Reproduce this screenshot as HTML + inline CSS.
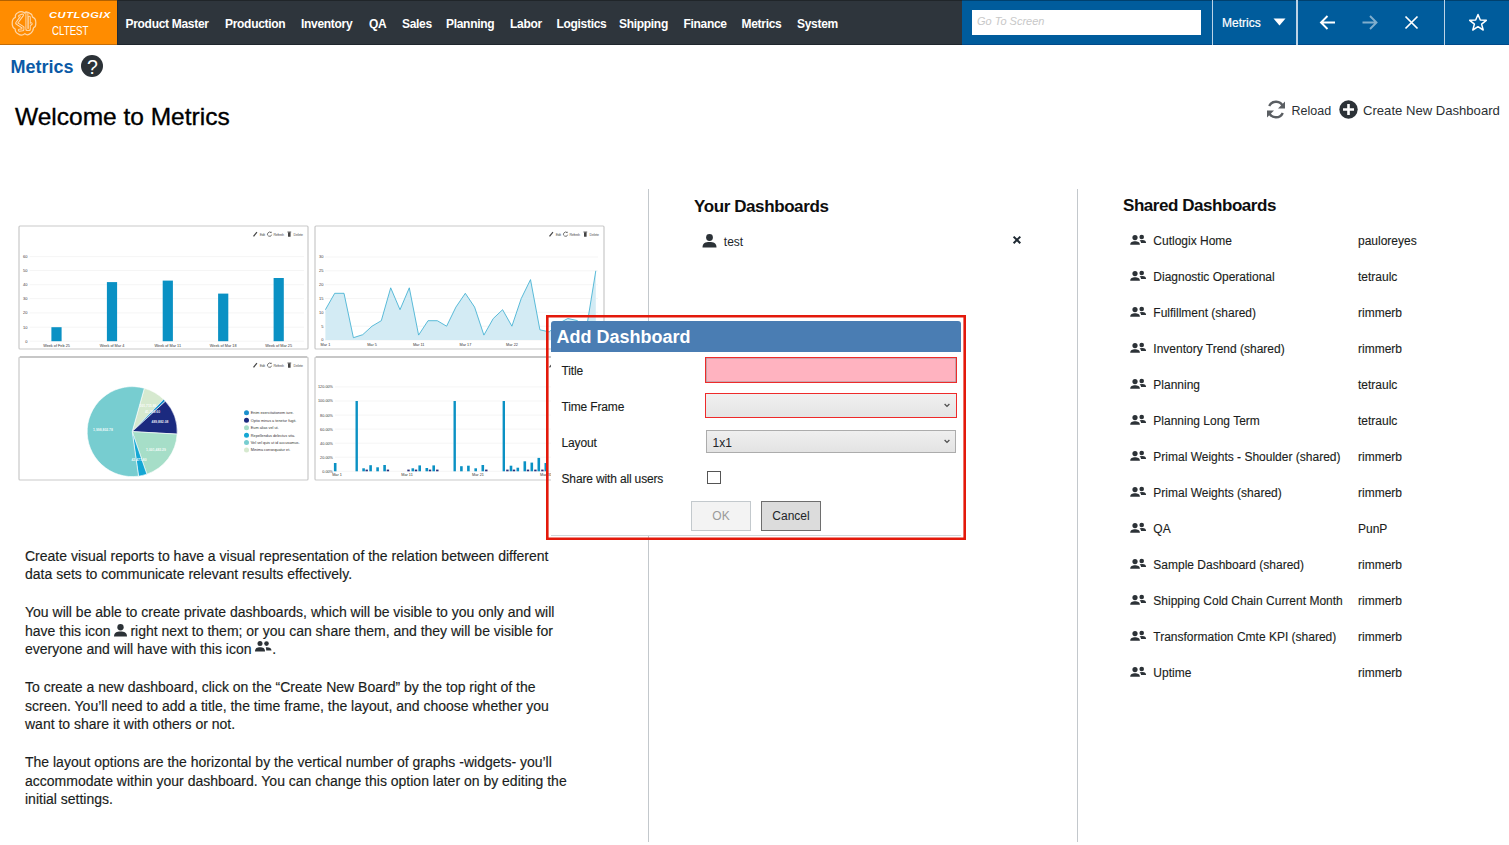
<!DOCTYPE html>
<html><head><meta charset="utf-8">
<style>
*{box-sizing:border-box}
html,body{margin:0;padding:0}
body{width:1509px;height:845px;position:relative;overflow:hidden;background:#fff;font-family:"Liberation Sans",sans-serif;color:#212529}
.a{position:absolute;white-space:nowrap}
.nav{position:absolute;left:0;top:0;width:1509px;height:45px;background:#2e353c}
.nv{position:absolute;top:17.5px;font-size:12px;font-weight:bold;color:#fff;line-height:12px;letter-spacing:-0.3px}
.sep{position:absolute;top:0;width:1.6px;height:45px;background:#bcd3e6}
.tile{position:absolute;border:1.5px solid #d2d2d2;border-radius:2px;background:#fff;overflow:hidden}
.row{position:absolute;left:1123px;height:20px;width:360px}
.sh{font-size:12px;line-height:12px;color:#1a1d20;-webkit-text-stroke:0.12px #1a1d20}
.lbl{position:absolute;left:561.5px;font-size:12px;line-height:12px;color:#1a1d20;letter-spacing:-0.15px;-webkit-text-stroke:0.12px #1a1d20}
.p{position:absolute;left:25px;top:546.6px;font-size:14px;line-height:18.75px;color:#1a1d20;white-space:nowrap;-webkit-text-stroke:0.15px #1a1d20}
</style></head><body>

<!-- NAVBAR -->
<div class="nav"></div>
<div class="a" style="left:0;top:0;width:117px;height:45px;background:#ff8c00;border-bottom:1px solid #c46d08"></div>
<div class="a" style="left:117px;top:44px;width:845px;height:1px;background:#1f262d"></div>
<div class="a" style="left:962px;top:0;width:547px;height:45px;background:#005c9c;border-bottom:1px solid #004a8a"></div>
<div class="a" style="left:0;top:0;width:1509px;height:1px;background:rgba(0,0,0,0.3)"></div>
<div class="a" style="left:116.5px;top:0;width:1.2px;height:45px;background:#1d2a38"></div>

<!-- logo -->
<svg class="a" style="left:11px;top:10px" width="26" height="27" viewBox="0 0 26 27" fill="none" stroke-linejoin="round" stroke-linecap="round">
  <path stroke="#ffd6a6" stroke-width="1.25" d="M13.5 3.1 C14.2 2.2 15 1.9 15.9 2 C17 2.2 18 2.6 18.8 3.3 C19.8 3.9 20.6 4.2 20.9 4.9 C21.2 5.8 21.2 6.5 21.5 7 C22.6 7.6 23.4 8 23.8 8.7 C24.6 10 24.9 11.2 24.8 12.4 C24.8 13.8 24.7 15 24.4 16.1 C24 16.9 23.3 17.4 22.6 17.8 C22.2 18.8 22.1 19.8 21.7 20.7 C21.1 21.8 20.4 22.6 19.7 23.2 C18.6 24 17.5 24.6 16.4 24.8 C15.4 24.8 14.6 24.3 13.9 23.6 C12.9 24.5 11.8 25.2 10.6 25.2 C9.4 25.1 8.2 24.6 7.3 24 C6.1 23.3 5.1 22.5 4.6 21.5 C4.2 20.7 4.3 19.8 4.1 19 C3.1 18.4 2.3 17.7 1.9 16.9 C1.3 15.6 1.1 14.2 1.2 12.8 C1.2 11.6 1.4 10.5 1.9 9.5 C2.5 8.5 3.4 7.9 4.4 7.4 C4.3 6.5 4.2 5.6 4.6 4.9 C5.1 3.9 5.9 3.2 6.8 2.7 C7.8 2 8.9 1.6 10.1 1.6 C11.1 1.6 12 1.8 12.6 2.2 C13 2.5 13.3 2.8 13.5 3.1"/>
  <g stroke="#ffd6a6" stroke-width="3"><path d="M8.6 6.2 L11.6 5 L5.6 13.2 L12 17.4 L11.8 19.8 L8.3 20.2"/><path d="M15.9 3.2 L15.9 19.4 L18.3 19.4 L18.3 14.8 L20.2 13.8 M18.3 14.8 L18.3 7.2"/></g>
  <g stroke="#ff8c00" stroke-width="1"><path d="M8.6 6.2 L11.6 5 L5.6 13.2 L12 17.4 L11.8 19.8 L8.3 20.2"/><path d="M15.9 3.2 L15.9 19.4 L18.3 19.4 L18.3 14.8 L20.2 13.8 M18.3 14.8 L18.3 7.2"/></g>
</svg>
<div class="a" style="left:49px;top:9.6px;font-size:9.5px;line-height:9px;font-weight:bold;font-style:italic;color:#fff;letter-spacing:0.55px;transform:scaleX(1.16);transform-origin:left">CUTLOGIX</div>
<div class="a" style="left:52px;top:25.4px;font-size:12px;line-height:12px;color:#fff;transform:scaleX(0.81);transform-origin:left">CLTEST</div>

<div class="nv" style="left:125.5px">Product Master</div>
<div class="nv" style="left:225px">Production</div>
<div class="nv" style="left:301px">Inventory</div>
<div class="nv" style="left:369px">QA</div>
<div class="nv" style="left:402px">Sales</div>
<div class="nv" style="left:446px">Planning</div>
<div class="nv" style="left:510px">Labor</div>
<div class="nv" style="left:556.5px">Logistics</div>
<div class="nv" style="left:619px">Shipping</div>
<div class="nv" style="left:683.5px">Finance</div>
<div class="nv" style="left:741.5px">Metrics</div>
<div class="nv" style="left:797px">System</div>

<!-- search -->
<div class="a" style="left:972.3px;top:10px;width:228.7px;height:25.3px;background:#fff"></div>
<div class="a" style="left:977px;top:15.6px;font-size:11px;line-height:11px;font-style:italic;color:#c8c8c8">Go To Screen</div>
<div class="sep" style="left:1211.5px"></div>
<div class="a" style="left:1222px;top:17.4px;font-size:12px;line-height:12px;color:#fff;-webkit-text-stroke:0.2px #fff">Metrics</div>
<svg class="a" style="left:1273px;top:18px" width="13" height="8"><path d="M0.5 0.5 L12.5 0.5 L6.5 7.5 Z" fill="#fff"/></svg>
<div class="sep" style="left:1296.2px"></div>
<svg class="a" style="left:1319px;top:14px" width="18" height="17" viewBox="0 0 18 17" fill="none" stroke="#fff" stroke-width="1.9">
  <path d="M16 8.5 L2 8.5 M8.5 2 L2 8.5 L8.5 15"/>
</svg>
<svg class="a" style="left:1361px;top:14px" width="18" height="17" viewBox="0 0 18 17" fill="none" stroke="#fff" stroke-width="1.9" opacity="0.5">
  <path d="M1.5 8.5 L15.5 8.5 M9 2 L15.5 8.5 L9 15"/>
</svg>
<svg class="a" style="left:1404px;top:15px" width="15" height="15" viewBox="0 0 15 15" fill="none" stroke="#fff" stroke-width="1.7">
  <path d="M1.5 1.5 L13.5 13.5 M13.5 1.5 L1.5 13.5"/>
</svg>
<div class="sep" style="left:1443.9px"></div>
<svg class="a" style="left:1468px;top:13px" width="20" height="19" viewBox="0 0 20 19" fill="none" stroke="#fff" stroke-width="1.5" stroke-linejoin="round">
  <path d="M10 1.5 L12.3 7 L18.3 7.3 L13.6 11.1 L15.2 17 L10 13.7 L4.8 17 L6.4 11.1 L1.7 7.3 L7.7 7 Z"/>
</svg>

<!-- page header -->
<div class="a" style="left:10.5px;top:58.1px;font-size:18px;line-height:18px;font-weight:bold;color:#0b5aa6">Metrics</div>
<div class="a" style="left:81px;top:55px;width:22px;height:22px;border-radius:50%;background:#2c3237"></div>
<div class="a" style="left:81.5px;top:57.5px;width:22px;text-align:center;font-size:19.5px;line-height:19.5px;color:#fff">?</div>

<div class="a" style="left:15px;top:105.2px;font-size:24.5px;line-height:24.5px;color:#000;-webkit-text-stroke:0.35px #000">Welcome to Metrics</div>

<svg class="a" style="left:1266px;top:100px" width="20" height="19" viewBox="0 0 20 19">
  <path d="M17 6.5 A7.5 7.5 0 0 0 3.2 6" fill="none" stroke="#5a5e62" stroke-width="2.4"/>
  <path d="M19 1.5 L19 8.5 L12 8.5 Z" fill="#5a5e62"/>
  <path d="M3 12.5 A7.5 7.5 0 0 0 16.8 13" fill="none" stroke="#5a5e62" stroke-width="2.4"/>
  <path d="M1 17.5 L1 10.5 L8 10.5 Z" fill="#5a5e62"/>
</svg>
<div class="a" style="left:1291.5px;top:104.9px;font-size:12.5px;line-height:12.5px;color:#2b2f33">Reload</div>
<svg class="a" style="left:1338.5px;top:100px" width="19" height="19" viewBox="0 0 19 19">
  <circle cx="9.5" cy="9.5" r="9.2" fill="#2c3237"/>
  <path d="M9.5 4 L9.5 15 M4 9.5 L15 9.5" stroke="#fff" stroke-width="2.6"/>
</svg>
<div class="a" style="left:1363px;top:104.1px;font-size:13.1px;line-height:13.1px;color:#2b2f33">Create New Dashboard</div>

<!-- separators -->
<div class="a" style="left:647.5px;top:189px;width:1.6px;height:653px;background:#c3c8cc"></div>
<div class="a" style="left:1076.5px;top:189px;width:1.6px;height:653px;background:#c3c8cc"></div>

<!-- TILES -->
<svg class="a" style="left:0;top:0" width="650" height="500" viewBox="0 0 650 500" font-family="Liberation Sans">
<defs><g id="tb" fill="#555">
<path d="M-55 10.6 L-51.5 6.2 L-50.6 7 L-54 11.3 Z" fill="#444"/>
<text x="-48.3" y="10.4" font-size="3.6" fill="#555" textLength="5.3">Edit</text>
<path d="M-37 7.2 A2.1 2.1 0 1 0 -36.4 9.2" fill="none" stroke="#555" stroke-width="0.8"/><path d="M-37.8 6.3 L-36.4 6.3 L-36.4 7.8 Z" fill="#555"/>
<text x="-34.4" y="10.4" font-size="3.6" fill="#555" textLength="10.4">Refresh</text>
<rect x="-20" y="6.8" width="2.6" height="4.4" rx="0.5" fill="#444"/><rect x="-20.6" y="6.1" width="3.8" height="0.8" fill="#444"/>
<text x="-14.5" y="10.4" font-size="3.6" fill="#555" textLength="9.5">Delete</text>
</g></defs>
<rect x="19" y="226" width="289" height="123" rx="1" fill="#fff" stroke="#c9c9c9" stroke-width="1.2"/>
<use href="#tb" transform="translate(308,225.5)"/>
<rect x="315" y="226" width="289" height="123" rx="1" fill="#fff" stroke="#c9c9c9" stroke-width="1.2"/>
<use href="#tb" transform="translate(604,225.5)"/>
<rect x="19" y="357" width="289" height="123" rx="1" fill="#fff" stroke="#c9c9c9" stroke-width="1.2"/>
<line x1="20" y1="357" x2="307" y2="357" stroke="#a9a9a9" stroke-width="1.2"/>
<use href="#tb" transform="translate(308,356.5)"/>
<rect x="315" y="357" width="289" height="123" rx="1" fill="#fff" stroke="#c9c9c9" stroke-width="1.2"/>
<line x1="316" y1="357" x2="603" y2="357" stroke="#a9a9a9" stroke-width="1.2"/>
<use href="#tb" transform="translate(604,356.5)"/>
<line x1="29.5" y1="256.6" x2="304" y2="256.6" stroke="#f1f1f1" stroke-width="0.7"/>
<text x="27.5" y="258.0" font-size="4" fill="#3a3a3a" text-anchor="end">60</text>
<line x1="29.5" y1="270.5" x2="304" y2="270.5" stroke="#f1f1f1" stroke-width="0.7"/>
<text x="27.5" y="271.9" font-size="4" fill="#3a3a3a" text-anchor="end">50</text>
<line x1="29.5" y1="284.7" x2="304" y2="284.7" stroke="#f1f1f1" stroke-width="0.7"/>
<text x="27.5" y="286.09999999999997" font-size="4" fill="#3a3a3a" text-anchor="end">40</text>
<line x1="29.5" y1="298.6" x2="304" y2="298.6" stroke="#f1f1f1" stroke-width="0.7"/>
<text x="27.5" y="300.0" font-size="4" fill="#3a3a3a" text-anchor="end">30</text>
<line x1="29.5" y1="312.9" x2="304" y2="312.9" stroke="#f1f1f1" stroke-width="0.7"/>
<text x="27.5" y="314.29999999999995" font-size="4" fill="#3a3a3a" text-anchor="end">20</text>
<line x1="29.5" y1="327.2" x2="304" y2="327.2" stroke="#f1f1f1" stroke-width="0.7"/>
<text x="27.5" y="328.59999999999997" font-size="4" fill="#3a3a3a" text-anchor="end">10</text>
<line x1="29.5" y1="341.2" x2="304" y2="341.2" stroke="#f1f1f1" stroke-width="0.7"/>
<text x="27.5" y="342.59999999999997" font-size="4" fill="#3a3a3a" text-anchor="end">0</text>
<rect x="51.4" y="327.2" width="10.2" height="14.0" fill="#0a91c4"/>
<text x="56.5" y="346.5" font-size="3.8" fill="#333" text-anchor="middle">Week of Feb 25</text>
<rect x="106.9" y="282.1" width="10.2" height="59.099999999999966" fill="#0a91c4"/>
<text x="112" y="346.5" font-size="3.8" fill="#333" text-anchor="middle">Week of Mar 4</text>
<rect x="162.70000000000002" y="280.6" width="10.2" height="60.599999999999966" fill="#0a91c4"/>
<text x="167.8" y="346.5" font-size="3.8" fill="#333" text-anchor="middle">Week of Mar 11</text>
<rect x="218.1" y="293.6" width="10.2" height="47.599999999999966" fill="#0a91c4"/>
<text x="223.2" y="346.5" font-size="3.8" fill="#333" text-anchor="middle">Week of Mar 18</text>
<rect x="273.59999999999997" y="278" width="10.2" height="63.19999999999999" fill="#0a91c4"/>
<text x="278.7" y="346.5" font-size="3.8" fill="#333" text-anchor="middle">Week of Mar 25</text>
<line x1="325" y1="257.0" x2="598" y2="257.0" stroke="#f1f1f1" stroke-width="0.7"/>
<text x="323.5" y="258.4" font-size="4" fill="#3a3a3a" text-anchor="end">30</text>
<line x1="325" y1="270.8" x2="598" y2="270.8" stroke="#f1f1f1" stroke-width="0.7"/>
<text x="323.5" y="272.2" font-size="4" fill="#3a3a3a" text-anchor="end">25</text>
<line x1="325" y1="284.7" x2="598" y2="284.7" stroke="#f1f1f1" stroke-width="0.7"/>
<text x="323.5" y="286.1" font-size="4" fill="#3a3a3a" text-anchor="end">20</text>
<line x1="325" y1="298.5" x2="598" y2="298.5" stroke="#f1f1f1" stroke-width="0.7"/>
<text x="323.5" y="299.9" font-size="4" fill="#3a3a3a" text-anchor="end">15</text>
<line x1="325" y1="312.3" x2="598" y2="312.3" stroke="#f1f1f1" stroke-width="0.7"/>
<text x="323.5" y="313.7" font-size="4" fill="#3a3a3a" text-anchor="end">10</text>
<line x1="325" y1="326.2" x2="598" y2="326.2" stroke="#f1f1f1" stroke-width="0.7"/>
<text x="323.5" y="327.6" font-size="4" fill="#3a3a3a" text-anchor="end">5</text>
<line x1="325" y1="340.0" x2="598" y2="340.0" stroke="#f1f1f1" stroke-width="0.7"/>
<text x="323.5" y="341.4" font-size="4" fill="#3a3a3a" text-anchor="end">0</text>
<path d="M325.4 309.7 L334.7 293.3 L344.0 293.3 L353.4 337.7 L362.7 334.7 L372.0 326.2 L381.3 320.7 L390.7 287.8 L400.0 309.7 L409.3 287.8 L418.6 335.1 L428.0 320.7 L437.3 320.7 L446.6 326.2 L455.9 307.1 L465.3 293.3 L474.6 307.1 L483.9 335.1 L493.2 318.6 L502.6 309.7 L511.9 326.2 L521.2 298.6 L530.5 279.6 L539.9 329.8 L549.2 331.9 L558.5 323.5 L567.8 318.5 L577.1 320.5 L586.5 328.0 L595.8 270.8 L595.8 340 L325.4 340 Z" fill="#d3ebf4"/>
<path d="M325.4 309.7 L334.7 293.3 L344.0 293.3 L353.4 337.7 L362.7 334.7 L372.0 326.2 L381.3 320.7 L390.7 287.8 L400.0 309.7 L409.3 287.8 L418.6 335.1 L428.0 320.7 L437.3 320.7 L446.6 326.2 L455.9 307.1 L465.3 293.3 L474.6 307.1 L483.9 335.1 L493.2 318.6 L502.6 309.7 L511.9 326.2 L521.2 298.6 L530.5 279.6 L539.9 329.8 L549.2 331.9 L558.5 323.5 L567.8 318.5 L577.1 320.5 L586.5 328.0 L595.8 270.8" fill="none" stroke="#40b0d2" stroke-width="0.85"/>
<text x="325.4" y="345.5" font-size="3.8" fill="#333" text-anchor="middle">Mar 1</text>
<text x="372" y="345.5" font-size="3.8" fill="#333" text-anchor="middle">Mar 5</text>
<text x="418.7" y="345.5" font-size="3.8" fill="#333" text-anchor="middle">Mar 11</text>
<text x="465.4" y="345.5" font-size="3.8" fill="#333" text-anchor="middle">Mar 17</text>
<text x="512" y="345.5" font-size="3.8" fill="#333" text-anchor="middle">Mar 22</text>
<path d="M132.2 431.6 L144.30 388.26 A45 45 0 0 1 163.57 399.34 Z" fill="#d6e9cf" stroke="#fff" stroke-width="0.6"/>
<path d="M132.2 431.6 L163.57 399.34 A45 45 0 0 1 165.38 401.20 Z" fill="#1a8fcc" stroke="#fff" stroke-width="0.6"/>
<path d="M132.2 431.6 L165.38 401.20 A45 45 0 0 1 177.13 434.11 Z" fill="#1b2a7f" stroke="#fff" stroke-width="0.6"/>
<path d="M132.2 431.6 L177.13 434.11 A45 45 0 0 1 146.85 474.15 Z" fill="#a6dec8" stroke="#fff" stroke-width="0.6"/>
<path d="M132.2 431.6 L146.85 474.15 A45 45 0 0 1 138.54 476.15 Z" fill="#15a7d4" stroke="#fff" stroke-width="0.6"/>
<path d="M132.2 431.6 L138.54 476.15 A45 45 0 1 1 144.30 388.26 Z" fill="#77cdd0" stroke="#fff" stroke-width="0.6"/>
<text x="103" y="430.5" font-size="3.4" font-weight="bold" fill="#fff" fill-opacity="0.9" text-anchor="middle">1,998,802.78</text>
<text x="148" y="407" font-size="3.4" font-weight="bold" fill="#fff" fill-opacity="0.9" text-anchor="middle">301,715.86</text>
<text x="152.5" y="412.5" font-size="3.4" font-weight="bold" fill="#fff" fill-opacity="0.9" text-anchor="middle">41,289.60</text>
<text x="160" y="423" font-size="3.4" font-weight="bold" fill="#fff" fill-opacity="0.9" text-anchor="middle">489,882.08</text>
<text x="156" y="450.5" font-size="3.4" font-weight="bold" fill="#fff" fill-opacity="0.9" text-anchor="middle">1,001,483.29</text>
<text x="139" y="461" font-size="3.4" font-weight="bold" fill="#fff" fill-opacity="0.9" text-anchor="middle">43,471.80</text>
<circle cx="246.5" cy="412.8" r="2.5" fill="#1a8fcc"/>
<text x="250.8" y="414.2" font-size="3.8" fill="#333">Enim exercitationem iure.</text>
<circle cx="246.5" cy="420.2" r="2.5" fill="#1b2a7f"/>
<text x="250.8" y="421.6" font-size="3.8" fill="#333">Optio minus a tenetur fugit.</text>
<circle cx="246.5" cy="427.7" r="2.5" fill="#a6dec8"/>
<text x="250.8" y="429.1" font-size="3.8" fill="#333">Eum alias vel ut.</text>
<circle cx="246.5" cy="435.2" r="2.5" fill="#15a7d4"/>
<text x="250.8" y="436.6" font-size="3.8" fill="#333">Repellendus delectus vita.</text>
<circle cx="246.5" cy="442.6" r="2.5" fill="#77cdd0"/>
<text x="250.8" y="444.0" font-size="3.8" fill="#333">Vel vel quis ut id accusamus.</text>
<circle cx="246.5" cy="450.1" r="2.5" fill="#d6e9cf"/>
<text x="250.8" y="451.4" font-size="3.8" fill="#333">Minima consequatur et.</text>
<line x1="335" y1="386.9" x2="600" y2="386.9" stroke="#f1f1f1" stroke-width="0.7"/>
<text x="333" y="388.3" font-size="3.8" fill="#3a3a3a" text-anchor="end">120.00%</text>
<line x1="335" y1="401.0" x2="600" y2="401.0" stroke="#f1f1f1" stroke-width="0.7"/>
<text x="333" y="402.4" font-size="3.8" fill="#3a3a3a" text-anchor="end">100.00%</text>
<line x1="335" y1="415.1" x2="600" y2="415.1" stroke="#f1f1f1" stroke-width="0.7"/>
<text x="333" y="416.5" font-size="3.8" fill="#3a3a3a" text-anchor="end">80.00%</text>
<line x1="335" y1="429.1" x2="600" y2="429.1" stroke="#f1f1f1" stroke-width="0.7"/>
<text x="333" y="430.5" font-size="3.8" fill="#3a3a3a" text-anchor="end">60.00%</text>
<line x1="335" y1="443.2" x2="600" y2="443.2" stroke="#f1f1f1" stroke-width="0.7"/>
<text x="333" y="444.6" font-size="3.8" fill="#3a3a3a" text-anchor="end">40.00%</text>
<line x1="335" y1="457.2" x2="600" y2="457.2" stroke="#f1f1f1" stroke-width="0.7"/>
<text x="333" y="458.6" font-size="3.8" fill="#3a3a3a" text-anchor="end">20.00%</text>
<line x1="335" y1="471.3" x2="600" y2="471.3" stroke="#f1f1f1" stroke-width="0.7"/>
<text x="333" y="472.7" font-size="3.8" fill="#3a3a3a" text-anchor="end">0.00%</text>
<rect x="333.9" y="463" width="2.6" height="8.3" fill="#0a91c4"/>
<rect x="355.5" y="401" width="2.4" height="70.3" fill="#0a91c4"/>
<rect x="362.3" y="468.3" width="2.6" height="3.0" fill="#0a91c4"/>
<rect x="369.3" y="465.2" width="2.6" height="6.1" fill="#0a91c4"/>
<rect x="376.3" y="467.3" width="2.6" height="4.0" fill="#0a91c4"/>
<rect x="383.3" y="465" width="2.6" height="6.3" fill="#0a91c4"/>
<rect x="411.5" y="468.3" width="2.6" height="3.0" fill="#0a91c4"/>
<rect x="418.4" y="465.4" width="2.6" height="5.9" fill="#0a91c4"/>
<rect x="425.5" y="468" width="2.6" height="3.3" fill="#0a91c4"/>
<rect x="432.4" y="465.4" width="2.6" height="5.9" fill="#0a91c4"/>
<rect x="453.5" y="401" width="2.4" height="70.3" fill="#0a91c4"/>
<rect x="460.1" y="466.2" width="2.6" height="5.1" fill="#0a91c4"/>
<rect x="467.1" y="465.7" width="2.6" height="5.6" fill="#0a91c4"/>
<rect x="474.4" y="468.3" width="2.6" height="3.0" fill="#0a91c4"/>
<rect x="481.5" y="465" width="2.6" height="6.3" fill="#0a91c4"/>
<rect x="502.6" y="401" width="2.4" height="70.3" fill="#0a91c4"/>
<rect x="509.7" y="465.7" width="2.6" height="5.6" fill="#0a91c4"/>
<rect x="516.5" y="467.7" width="2.6" height="3.6" fill="#0a91c4"/>
<rect x="523.5" y="461.3" width="2.6" height="10.0" fill="#0a91c4"/>
<rect x="530.5" y="462.6" width="2.6" height="8.7" fill="#0a91c4"/>
<rect x="537.5" y="457.9" width="2.6" height="13.4" fill="#0a91c4"/>
<rect x="544.5" y="463" width="2.6" height="8.3" fill="#0a91c4"/>
<rect x="551.5" y="466" width="2.6" height="5.3" fill="#0a91c4"/>
<rect x="558.6" y="404" width="2.4" height="67.3" fill="#0a91c4"/>
<rect x="565.5" y="466" width="2.6" height="5.3" fill="#0a91c4"/>
<rect x="572.5" y="464" width="2.6" height="7.3" fill="#0a91c4"/>
<rect x="579.5" y="466" width="2.6" height="5.3" fill="#0a91c4"/>
<rect x="586.5" y="463" width="2.6" height="8.3" fill="#0a91c4"/>
<rect x="593.5" y="466" width="2.6" height="5.3" fill="#0a91c4"/>
<rect x="365.5" y="469.6" width="2.4" height="1.7" fill="#2a2f7a"/>
<rect x="386.7" y="469.6" width="2.4" height="1.7" fill="#2a2f7a"/>
<rect x="407.3" y="469.6" width="2.4" height="1.7" fill="#2a2f7a"/>
<rect x="414.8" y="469.6" width="2.4" height="1.7" fill="#2a2f7a"/>
<rect x="428.8" y="469.6" width="2.4" height="1.7" fill="#2a2f7a"/>
<rect x="436.1" y="469.6" width="2.4" height="1.7" fill="#2a2f7a"/>
<rect x="485.1" y="469.6" width="2.4" height="1.7" fill="#2a2f7a"/>
<rect x="506.2" y="469.6" width="2.4" height="1.7" fill="#2a2f7a"/>
<rect x="512.8" y="469.6" width="2.4" height="1.7" fill="#2a2f7a"/>
<rect x="526.8" y="469.6" width="2.4" height="1.7" fill="#2a2f7a"/>
<rect x="534.2" y="469.6" width="2.4" height="1.7" fill="#2a2f7a"/>
<rect x="541.2" y="469.6" width="2.4" height="1.7" fill="#2a2f7a"/>
<text x="337" y="475.5" font-size="3.8" fill="#333" text-anchor="middle">Mar 1</text>
<text x="407" y="475.5" font-size="3.8" fill="#333" text-anchor="middle">Mar 11</text>
<text x="478" y="475.5" font-size="3.8" fill="#333" text-anchor="middle">Mar 21</text>
<text x="546" y="475.5" font-size="3.8" fill="#333" text-anchor="middle">Mar 31</text>
</svg>
<!-- /TILES -->

<!-- your dashboards -->
<div class="a" style="left:694px;top:198.1px;font-size:17px;line-height:17px;font-weight:bold;color:#0e0e0e;letter-spacing:-0.4px">Your Dashboards</div>
<svg class="a" style="left:701.5px;top:233.5px" width="15" height="14" viewBox="0 0 15 14">
  <circle cx="7.5" cy="3.5" r="3.4" fill="#2c3237"/>
  <path d="M0.5 13.5 C0.5 9 3.5 8 7.5 8 C11.5 8 14.5 9 14.5 13.5 Z" fill="#2c3237"/>
</svg>
<div class="a" style="left:723.8px;top:236.1px;font-size:12px;line-height:12px;color:#212529">test</div>
<svg class="a" style="left:1012.2px;top:234.6px" width="10" height="10" viewBox="0 0 10 10">
  <path d="M1.6 1.6 L8.3 8.3 M8.3 1.6 L1.6 8.3" stroke="#1f2a33" stroke-width="2"/>
</svg>

<!-- shared dashboards -->
<div class="a" style="left:1123px;top:197.4px;font-size:17px;line-height:17px;font-weight:bold;color:#0e0e0e;letter-spacing:-0.45px">Shared Dashboards</div>
<svg width="0" height="0" style="position:absolute"><defs><g id="ppl" fill="#2c3237"><circle cx="5" cy="3.6" r="2.6"/><path d="M0.2 10.8 C0.2 8 2.4 7.2 5 7.2 C7.6 7.2 9.9 8 9.9 10.8 Z"/><circle cx="11.7" cy="3" r="2.3"/><path d="M9.5 6.2 L12.5 6.1 C14.8 6.1 16.1 7.3 16.1 9.1 L11.1 9.1 C10.9 7.8 10.4 6.8 9.5 6.2 Z"/></g></defs></svg>
<svg class="a" style="left:1130px;top:234px" width="17" height="12" viewBox="0 0 17 12"><use href="#ppl"/></svg>
<div class="a sh" style="left:1153.3px;top:235.04px">Cutlogix Home</div>
<div class="a sh" style="left:1358px;top:235.04px">pauloreyes</div>
<svg class="a" style="left:1130px;top:270px" width="17" height="12" viewBox="0 0 17 12"><use href="#ppl"/></svg>
<div class="a sh" style="left:1153.3px;top:271.04px">Diagnostic Operational</div>
<div class="a sh" style="left:1358px;top:271.04px">tetraulc</div>
<svg class="a" style="left:1130px;top:306px" width="17" height="12" viewBox="0 0 17 12"><use href="#ppl"/></svg>
<div class="a sh" style="left:1153.3px;top:307.04px">Fulfillment (shared)</div>
<div class="a sh" style="left:1358px;top:307.04px">rimmerb</div>
<svg class="a" style="left:1130px;top:342px" width="17" height="12" viewBox="0 0 17 12"><use href="#ppl"/></svg>
<div class="a sh" style="left:1153.3px;top:343.04px">Inventory Trend (shared)</div>
<div class="a sh" style="left:1358px;top:343.04px">rimmerb</div>
<svg class="a" style="left:1130px;top:378px" width="17" height="12" viewBox="0 0 17 12"><use href="#ppl"/></svg>
<div class="a sh" style="left:1153.3px;top:379.04px">Planning</div>
<div class="a sh" style="left:1358px;top:379.04px">tetraulc</div>
<svg class="a" style="left:1130px;top:414px" width="17" height="12" viewBox="0 0 17 12"><use href="#ppl"/></svg>
<div class="a sh" style="left:1153.3px;top:415.04px">Planning Long Term</div>
<div class="a sh" style="left:1358px;top:415.04px">tetraulc</div>
<svg class="a" style="left:1130px;top:450px" width="17" height="12" viewBox="0 0 17 12"><use href="#ppl"/></svg>
<div class="a sh" style="left:1153.3px;top:451.04px">Primal Weights - Shoulder (shared)</div>
<div class="a sh" style="left:1358px;top:451.04px">rimmerb</div>
<svg class="a" style="left:1130px;top:486px" width="17" height="12" viewBox="0 0 17 12"><use href="#ppl"/></svg>
<div class="a sh" style="left:1153.3px;top:487.04px">Primal Weights (shared)</div>
<div class="a sh" style="left:1358px;top:487.04px">rimmerb</div>
<svg class="a" style="left:1130px;top:522px" width="17" height="12" viewBox="0 0 17 12"><use href="#ppl"/></svg>
<div class="a sh" style="left:1153.3px;top:523.04px">QA</div>
<div class="a sh" style="left:1358px;top:523.04px">PunP</div>
<svg class="a" style="left:1130px;top:558px" width="17" height="12" viewBox="0 0 17 12"><use href="#ppl"/></svg>
<div class="a sh" style="left:1153.3px;top:559.04px">Sample Dashboard (shared)</div>
<div class="a sh" style="left:1358px;top:559.04px">rimmerb</div>
<svg class="a" style="left:1130px;top:594px" width="17" height="12" viewBox="0 0 17 12"><use href="#ppl"/></svg>
<div class="a sh" style="left:1153.3px;top:595.04px">Shipping Cold Chain Current Month</div>
<div class="a sh" style="left:1358px;top:595.04px">rimmerb</div>
<svg class="a" style="left:1130px;top:630px" width="17" height="12" viewBox="0 0 17 12"><use href="#ppl"/></svg>
<div class="a sh" style="left:1153.3px;top:631.04px">Transformation Cmte KPI (shared)</div>
<div class="a sh" style="left:1358px;top:631.04px">rimmerb</div>
<svg class="a" style="left:1130px;top:666px" width="17" height="12" viewBox="0 0 17 12"><use href="#ppl"/></svg>
<div class="a sh" style="left:1153.3px;top:667.04px">Uptime</div>
<div class="a sh" style="left:1358px;top:667.04px">rimmerb</div>

<!-- paragraphs -->
<div class="p">Create visual reports to have a visual representation of the relation between different<br>data sets to communicate relevant results effectively.<br>&nbsp;<br>You will be able to create private dashboards, which will be visible to you only and will<br>have this icon <svg width="15" height="13" viewBox="0 0 15 14" style="vertical-align:-1px;margin-left:-2px;margin-right:-1px"><circle cx="7.5" cy="3.5" r="3.4" fill="#2c3237"/><path d="M0.5 13.5 C0.5 9 3.5 8 7.5 8 C11.5 8 14.5 9 14.5 13.5 Z" fill="#2c3237"/></svg> right next to them; or you can share them, and they will be visible for<br>everyone and will have with this icon <svg width="17" height="11" viewBox="0 0 17 11" style="vertical-align:2px"><circle cx="5" cy="2.6" r="2.5" fill="#2c3237"/><path d="M0 10.5 C0 7 2 6.2 5 6.2 C8 6.2 10 7 10 10.5 Z" fill="#2c3237"/><circle cx="11.5" cy="2.6" r="2.3" fill="#2c3237"/><path d="M10.8 6.3 C14 6 16.5 7 16.5 9.5 L11.2 9.5 C11.2 8 11 7 10.8 6.3 Z" fill="#2c3237"/></svg>.<br>&nbsp;<br>To create a new dashboard, click on the “Create New Board” by the top right of the<br>screen. You’ll need to add a title, the time frame, the layout, and choose whether you<br>want to share it with others or not.<br>&nbsp;<br>The layout options are the horizontal by the vertical number of graphs -widgets- you’ll<br>accommodate within your dashboard. You can change this option later on by editing the<br>initial settings.</div>

<!-- DIALOG -->
<div class="a" style="left:551px;top:321px;width:410px;height:215px;background:#fff"></div>
<div class="a" style="left:551px;top:321px;width:410px;height:30.5px;background:#4a7db3;border-radius:3px 3px 0 0"></div>
<div class="a" style="left:556.5px;top:327.5px;font-size:18px;line-height:18px;font-weight:bold;color:#fff">Add Dashboard</div>
<div class="lbl" style="top:365px">Title</div>
<div class="lbl" style="top:401.1px">Time Frame</div>
<div class="lbl" style="top:436.8px">Layout</div>
<div class="lbl" style="top:472.5px">Share with all users</div>
<div class="a" style="left:705px;top:357px;width:252px;height:25.5px;background:#ffb3c0;border:1.5px solid #ee2a2a;box-shadow:inset 0 0 0 0.6px #9a9a9a"></div>
<div class="a" style="left:705px;top:393px;width:252px;height:25px;background:linear-gradient(#f0f0f0,#e4e4e4);border:1.5px solid #ee2a2a"></div>
<svg class="a" style="left:942.5px;top:401.5px" width="8" height="7" viewBox="0 0 8 7"><path d="M1.6 2 L4 4.4 L6.4 2" fill="none" stroke="#505050" stroke-width="1.3"/></svg>
<div class="a" style="left:706px;top:430px;width:250px;height:23px;background:linear-gradient(#efefef,#e3e3e3);border:1px solid #acacac"></div>
<div class="a" style="left:712.5px;top:436.5px;font-size:12px;line-height:12px;color:#212529">1x1</div>
<svg class="a" style="left:942.5px;top:437.5px" width="8" height="7" viewBox="0 0 8 7"><path d="M1.6 2 L4 4.4 L6.4 2" fill="none" stroke="#505050" stroke-width="1.3"/></svg>
<div class="a" style="left:707px;top:471px;width:14px;height:13px;background:#fff;border:1px solid #555"></div>
<div class="a" style="left:691px;top:501px;width:60px;height:30px;background:#f3f3f3;border:1px solid #c3c9cd"></div>
<div class="a" style="left:691px;top:509.5px;width:60px;text-align:center;font-size:12px;line-height:12px;color:#9a9a9a">OK</div>
<div class="a" style="left:761px;top:501px;width:60px;height:30px;background:#dcdcdc;border:1.5px solid #6e6e6e"></div>
<div class="a" style="left:761px;top:509.5px;width:60px;text-align:center;font-size:12px;line-height:12px;color:#212529">Cancel</div>
<div class="a" style="left:551px;top:535px;width:410px;height:1px;background:#cfd6da"></div>
<div class="a" style="left:545.5px;top:315.2px;width:420.3px;height:224.5px;box-shadow:inset 0 0 0 2.6px #e3190b"></div>

</body></html>
